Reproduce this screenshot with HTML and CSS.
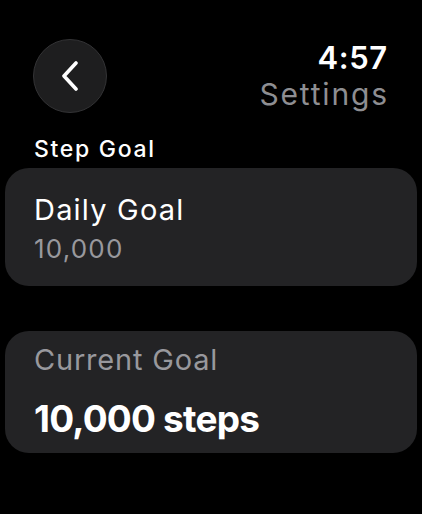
FILE: index.html
```html
<!DOCTYPE html>
<html lang="en">
<head>
<meta charset="UTF-8">
<meta name="viewport" content="width=device-width, initial-scale=1.0">
<title>Settings</title>
<link rel="stylesheet" href="styles.css">
</head>
<body>

<div class="header">
    <button class="back" aria-label="Back">
        <svg width="20" height="30" viewBox="0 0 20 30">
            <path d="M16 2 L4 15 L16 28" fill="none" stroke="#fff" stroke-width="3.6" stroke-linecap="round" stroke-linejoin="round"/>
        </svg>
    </button>
    <div class="titles">
        <div class="time">4:57</div>
        <div class="title">Settings</div>
    </div>
</div>

<h2 class="section">Step Goal</h2>

<div class="card goal">
    <div class="label">Daily Goal</div>
    <div class="value">10,000</div>
</div>

<div class="card current">
    <div class="sub">Current Goal</div>
    <div class="big">10,000 steps</div>
</div>

</body>
</html>
```

FILE: styles.css
```css
body {
    font-family: Inter, "Noto Sans", sans-serif;
    background: #000;
    color: #fff;
    margin: 0;
    padding: 0 5px;
}
.header {
    display: flex;
    justify-content: space-between;
    align-items: flex-start;
    padding: 39px 30px 0 28px;
}
.back {
    width: 74px;
    height: 74px;
    border-radius: 50%;
    background: #1e1e1f;
    border: 1.5px solid #333335;
    display: flex;
    align-items: center;
    justify-content: center;
    padding: 0;
    margin: 0;
}
.titles {
    text-align: right;
}
.time {
    font-size: 31px;
    font-weight: 600;
    line-height: 36px;
    margin-top: 1px;
    letter-spacing: 0.5px;
    margin-right: -0.5px;
}
.title {
    font-size: 30px;
    color: #8e8e92;
    line-height: 36px;
    letter-spacing: 1.8px;
    margin-right: -1.8px;
}
.section {
    font-size: 23px;
    font-weight: 500;
    margin: 23px 0 0 29px;
    line-height: 27px;
    letter-spacing: 1.7px;
}
.card {
    background: #232325;
    border-radius: 24px;
    padding: 0 29px;
}
.goal {
    margin-top: 5px;
    height: 118px;
    padding-top: 24px;
    box-sizing: border-box;
}
.label {
    font-size: 29px;
    line-height: 36px;
    letter-spacing: 1.2px;
}
.value {
    font-size: 26px;
    color: #98989d;
    line-height: 30px;
    margin-top: 6px;
    letter-spacing: 1.2px;
}
.current {
    margin-top: 45px;
    height: 122px;
    padding-top: 11px;
    box-sizing: border-box;
}
.sub {
    font-size: 29px;
    color: #98989d;
    line-height: 36px;
    letter-spacing: 0.8px;
}
.big {
    font-size: 37px;
    font-weight: 700;
    line-height: 44px;
    margin-top: 19px;
    letter-spacing: -0.8px;
}
```
